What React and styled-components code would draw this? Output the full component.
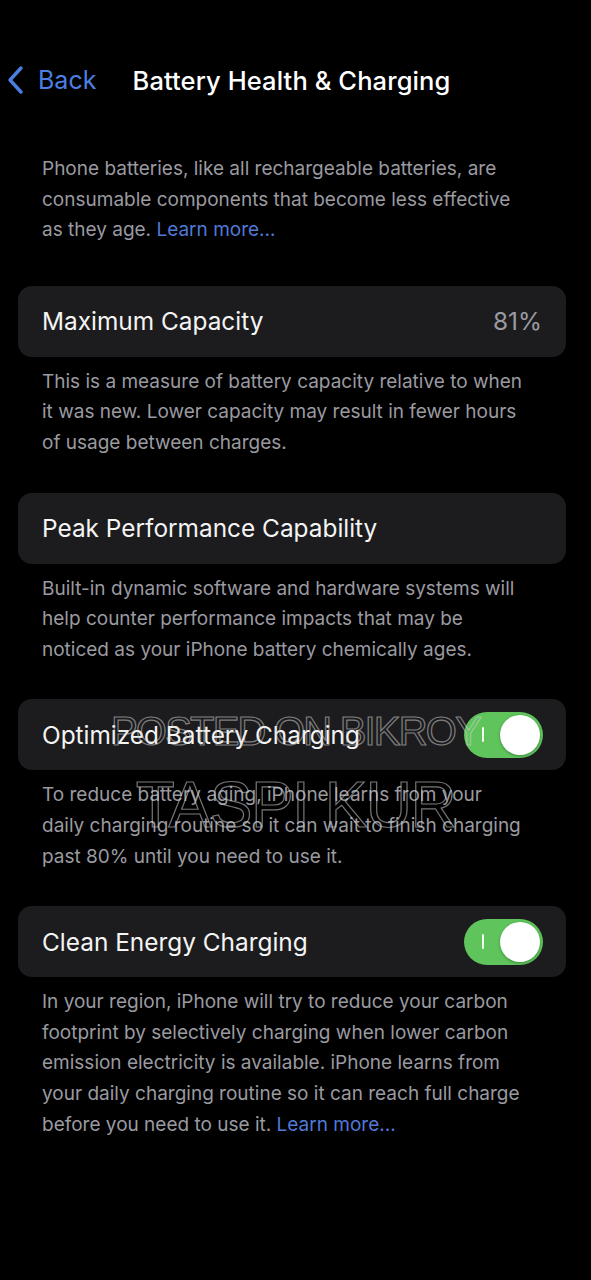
import React from 'react';
import styled, { createGlobalStyle } from 'styled-components';

const GlobalStyle = createGlobalStyle`
  html, body {
    margin: 0;
    padding: 0;
    background: #000;
  }
  body {
    font-family: Inter, "Noto Sans", "Liberation Sans", sans-serif;
    -webkit-font-smoothing: antialiased;
  }
`;

const Screen = styled.div`
  position: relative;
  width: 591px;
  min-height: 1280px;
  background: #000;
  color: #fff;
  overflow: hidden;
`;

const NavBar = styled.div`
  position: relative;
  height: 56px;
  margin-top: 52px;
  display: flex;
  align-items: center;
  justify-content: center;
`;

const BackButton = styled.div`
  position: absolute;
  left: 6px;
  top: 0;
  bottom: 0;
  display: flex;
  align-items: center;
  gap: 12px;
  color: #4c7fe2;
  font-size: 25px;
`;

const Title = styled.h1`
  margin: 0 0 0 -8px;
  font-size: 25.5px;
  font-weight: 500;
  letter-spacing: 0.1px;
  color: #fff;
`;

const Note = styled.p`
  margin: 0;
  padding: ${(p) => p.$pad || '0 0 0 42px'};
  font-size: 19px;
  line-height: 30.6px;
  color: #9a9aa0;
  white-space: nowrap;
`;

const Link = styled.span`
  color: #5079d8;
`;

const Section = styled.section`
  margin: ${(p) => p.$first ? '40px 0 0' : '34px 0 0'};
`;

const Card = styled.div`
  margin: 0 25px 0 18px;
  height: 71px;
  border-radius: 14px;
  background: #1c1c1e;
  display: flex;
  align-items: center;
  justify-content: space-between;
  padding: 0 24px 0 24px;
  box-sizing: border-box;
`;

const Label = styled.span`
  font-size: 24.4px;
  color: #f4f4f4;
`;

const Value = styled.span`
  font-size: 24.4px;
  color: #9a9aa0;
`;

const Footer = styled(Note)`
  padding-top: 10px;
`;

const Toggle = styled.div`
  position: relative;
  width: 79px;
  height: 46px;
  border-radius: 23px;
  background: #5ec45b;
  margin-right: -1px;
`;

const Knob = styled.div`
  position: absolute;
  right: 3px;
  top: 3px;
  width: 40px;
  height: 40px;
  border-radius: 50%;
  background: #fff;
  box-shadow: 0 1px 3px rgba(0, 0, 0, 0.3);
`;

const OnMark = styled.div`
  position: absolute;
  left: 18px;
  top: 15px;
  width: 2px;
  height: 15px;
  border-radius: 1px;
  background: rgba(255, 255, 255, 0.9);
`;

const Watermark = styled.div`
  position: absolute;
  left: 0;
  width: 591px;
  text-align: center;
  font-family: "Liberation Sans", Arial, sans-serif;
  color: transparent;
  -webkit-text-stroke: 1.2px rgba(210, 210, 210, 0.55);
  pointer-events: none;
  white-space: nowrap;
  top: ${(p) => p.$top}px;
  font-size: ${(p) => p.$size}px;
  letter-spacing: ${(p) => p.$spacing}px;
  padding-left: ${(p) => p.$shift}px;
  box-sizing: border-box;
`;

const Chevron = () => (
  <svg width="20" height="30" viewBox="0 0 20 30" fill="none">
    <path d="M15 3 L4 15 L15 27" stroke="#4c7fe2" strokeWidth="3.4" strokeLinecap="round" strokeLinejoin="round" />
  </svg>
);

const Switch = () => (
  <Toggle>
    <OnMark />
    <Knob />
  </Toggle>
);

const Lines = ({ lines, link }) =>
  lines.map((line, i) => (
    <React.Fragment key={i}>
      {line}
      {i === lines.length - 1 && link && <> <Link>Learn more...</Link></>}
      {i < lines.length - 1 && <br />}
    </React.Fragment>
  ));

const sections = [
  {
    label: 'Maximum Capacity',
    value: '81%',
    lines: [
      'This is a measure of battery capacity relative to when',
      'it was new. Lower capacity may result in fewer hours',
      'of usage between charges.',
    ],
  },
  {
    label: 'Peak Performance Capability',
    lines: [
      'Built-in dynamic software and hardware systems will',
      'help counter performance impacts that may be',
      'noticed as your iPhone battery chemically ages.',
    ],
  },
  {
    label: 'Optimized Battery Charging',
    toggle: true,
    lines: [
      'To reduce battery aging, iPhone learns from your',
      'daily charging routine so it can wait to finish charging',
      'past 80% until you need to use it.',
    ],
  },
  {
    label: 'Clean Energy Charging',
    toggle: true,
    lines: [
      'In your region, iPhone will try to reduce your carbon',
      'footprint by selectively charging when lower carbon',
      'emission electricity is available. iPhone learns from',
      'your daily charging routine so it can reach full charge',
      'before you need to use it.',
    ],
    link: true,
  },
];

const intro = [
  'Phone batteries, like all rechargeable batteries, are',
  'consumable components that become less effective',
  'as they age.',
];

export default function App() {
  return (
    <Screen>
      <GlobalStyle />
      <NavBar>
        <BackButton>
          <Chevron />
          <span>Back</span>
        </BackButton>
        <Title>Battery Health &amp; Charging</Title>
      </NavBar>

      <Note $pad="46px 0 0 42px">
        <Lines lines={intro} link />
      </Note>

      {sections.map((s, i) => (
        <Section key={s.label} $first={i === 0}>
          <Card>
            <Label>{s.label}</Label>
            {s.value && <Value>{s.value}</Value>}
            {s.toggle && <Switch />}
          </Card>
          <Footer>
            <Lines lines={s.lines} link={s.link} />
          </Footer>
        </Section>
      ))}

      <Watermark $top={709} $size={40} $spacing={-1.8} $shift={-4}>POSTED ON BIKROY</Watermark>
      <Watermark $top={768} $size={64} $spacing={-1.5} $shift={0}>TASPI KUR</Watermark>
    </Screen>
  );
}
